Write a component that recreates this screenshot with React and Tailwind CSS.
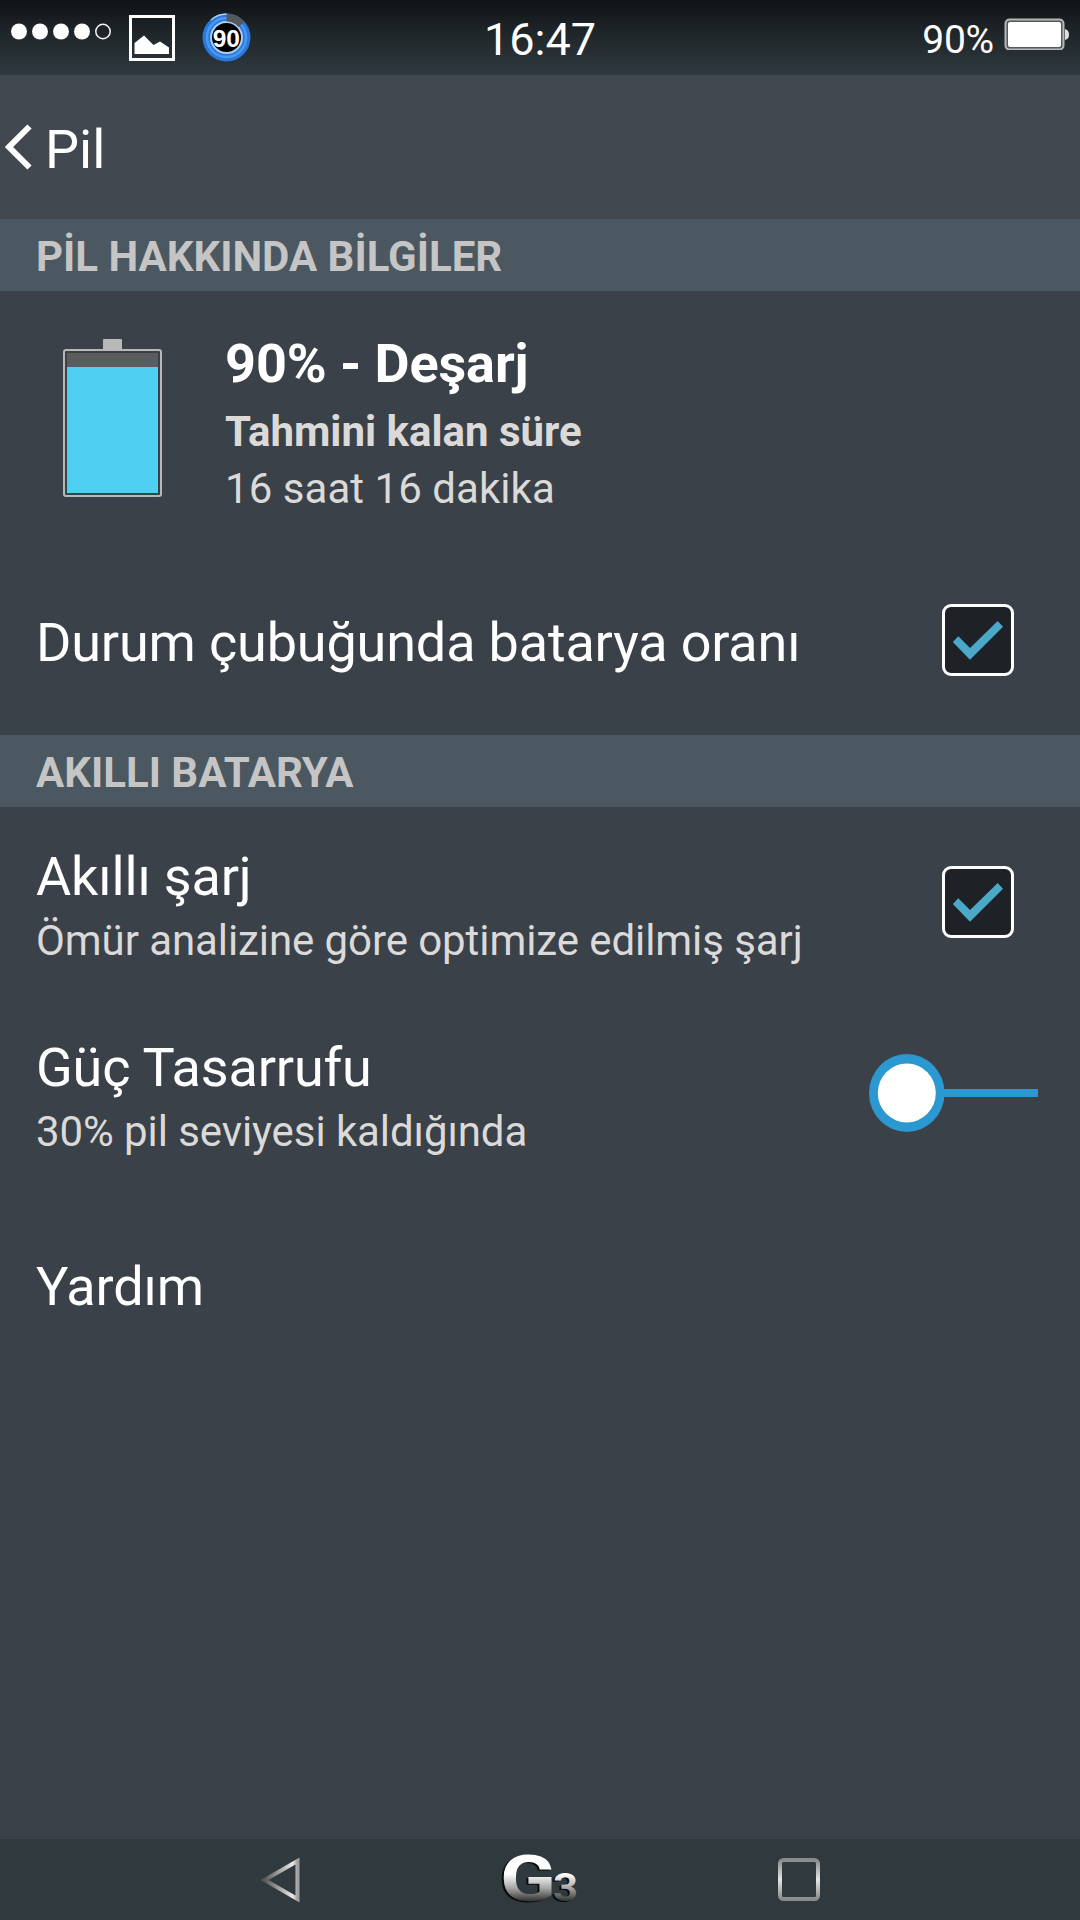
import React, { useState } from 'react';

const StatusBar = () => {
  return (
    <div className="h-[75px] shrink-0 grid grid-cols-3 bg-linear-to-b from-[#101316] via-[#21282c] to-[#2f393f]">
      <div className="flex items-start">
        <svg width="120" height="75" viewBox="0 0 120 75" className="shrink-0">
          {[19, 40, 61, 82].map((cx) => (
            <circle key={cx} cx={cx} cy="31.5" r="8" fill="#fff" />
          ))}
          <circle cx="103" cy="31.5" r="7.2" fill="none" stroke="#f4f4f4" strokeWidth="1.5" />
        </svg>
        {/* gallery notification */}
        <svg width="46" height="46" viewBox="0 0 46 46" className="ml-[9px] mt-[15px] shrink-0">
          <rect x="1.5" y="1.5" width="43" height="43" fill="none" stroke="#fff" strokeWidth="3" />
          <path d="M5.5 39V28L15 20.5L24.5 30L31 26.5L40 32.5V39Z" fill="#fff" />
        </svg>
        {/* battery monitor notification */}
        <svg width="50" height="50" viewBox="0 0 50 50" className="ml-[27px] mt-[12px] shrink-0">
          <circle cx="24.5" cy="25.5" r="24" fill="#2a78dc" />
          <circle cx="24.5" cy="25.5" r="19.5" fill="none" stroke="#4b98f0" strokeWidth="2.5" />
          <circle cx="24.5" cy="25.5" r="15.5" fill="#000" stroke="#a9cdf8" strokeWidth="2" />
          <path d="M24.5 1.5A24 24 0 0 1 42.5 10L36.5 15A16 16 0 0 0 24.5 9.5Z" fill="#55585a" />
          <path d="M24.5 2A23.500 23.500 0 0 0 9 8" fill="none" stroke="#a9cdf8" strokeWidth="1.5" />
          <text x="24.3" y="35" textAnchor="middle" fontSize="24.5" fontWeight="700" fill="#fff" fontFamily="Liberation Sans, sans-serif">90</text>
        </svg>
      </div>
      <div className="text-center text-[45px] leading-[79px] text-white">16:47</div>
      <div className="flex items-start justify-end pr-[11px]">
        <span className="text-[39px] leading-[80px] tracking-[-0.2px] text-white">90%</span>
        <svg width="65" height="32" viewBox="0 0 65 32" className="ml-2.5 mt-[18px]">
          <rect x="1.5" y="1.5" width="58" height="30" rx="4" fill="#55595c" stroke="#b5b7b9" strokeWidth="2" />
          <rect x="4" y="4" width="53" height="25" rx="2" fill="#fff" />
          <path d="M61 11Q65 12 65 16.500Q65 21 61 22Z" fill="#e0e0e0" />
        </svg>
      </div>
    </div>
  );
};

const SectionTitle = ({ children }) => (
  <h2 className="h-[72px] shrink-0 bg-[#4b5861] px-9 pt-[3px] text-[42px] leading-[70px] font-bold text-[#c5c5c5] whitespace-nowrap">
    {children}
  </h2>
);

const Checkbox = ({ checked, onChange }) => (
  <button
    onClick={() => onChange(!checked)}
    className="mr-[30px] size-[72px] shrink-0 rounded-[9px] border-3 border-white bg-[#1e2227]"
  >
    {checked && (
      <svg width="66" height="66" viewBox="3 3 66 66">
        <path d="M10.800 38L16.300 32.300L28 44L55.700 17L61 22.700L28 55.700Z" fill="#4aa8c8" />
      </svg>
    )}
  </button>
);

const Toggle = ({ onClick }) => (
  <button onClick={onClick} className="mr-[5px] shrink-0">
    <svg width="170" height="78" viewBox="0 0 170 78" className="block">
      <rect x="38" y="35" width="131" height="8" fill="#2b99cf" />
      <ellipse cx="37.800" cy="39" rx="37.800" ry="39" fill="#2b99cf" />
      <ellipse cx="37.800" cy="39" rx="29" ry="29.500" fill="#fff" />
    </svg>
  </button>
);

const SettingRow = ({ title, summary, height = 'h-[190px]', children }) => (
  <div className={`${height} shrink-0 flex items-center justify-between px-9`}>
    <div className={summary ? 'pt-[14px]' : 'pt-[5px]'}>
      <p className="text-[54px] leading-[63px] tracking-[-0.17px] text-white whitespace-nowrap">{title}</p>
      {summary && (
        <p className="text-[42px] leading-[65px] tracking-[-0.08px] text-[#dbdad9] whitespace-nowrap">{summary}</p>
      )}
    </div>
    {children}
  </div>
);

const NavBar = () => (
  <div className="mt-auto h-[81px] shrink-0 bg-[#2f393e] flex">
    <svg width="1080" height="81" viewBox="0 0 1080 81">
      <defs>
        <linearGradient id="metal" x1="0" y1="16" x2="0" y2="63" gradientUnits="userSpaceOnUse">
          <stop offset="0.4" stopColor="#fff" />
          <stop offset="0.7" stopColor="#a8a8a8" />
          <stop offset="1" stopColor="#2a2a2a" />
        </linearGradient>
        <linearGradient id="back" x1="0" y1="0" x2="1" y2="0">
          <stop offset="0" stopColor="#5a5656" />
          <stop offset="0.85" stopColor="#e8e8e8" />
          <stop offset="1" stopColor="#a0a0a0" />
        </linearGradient>
        <linearGradient id="recent" x1="0" y1="0" x2="0" y2="1">
          <stop offset="0" stopColor="#8a8a8a" />
          <stop offset="0.500" stopColor="#e4e4e4" />
          <stop offset="1" stopColor="#8a8a8a" />
        </linearGradient>
      </defs>
      <path d="M264.500 41L297.500 22V60Z" fill="none" stroke="url(#back)" strokeWidth="4" />
      <g fontFamily="Roboto, sans-serif" fontWeight="700">
        <text x="498" y="63" fontSize="64" textLength="56" lengthAdjust="spacingAndGlyphs" fill="#0a0a0a">G</text>
        <text x="500" y="62" fontSize="64" textLength="56" lengthAdjust="spacingAndGlyphs" fill="url(#metal)">G</text>
        <text x="551" y="63" fontSize="38" textLength="25" lengthAdjust="spacingAndGlyphs" fill="#0a0a0a">3</text>
        <text x="553" y="62" fontSize="38" textLength="25" lengthAdjust="spacingAndGlyphs" fill="url(#metal)">3</text>
      </g>
      <rect x="780" y="21" width="38" height="39" rx="3.500" fill="none" stroke="url(#recent)" strokeWidth="4" />
    </svg>
  </div>
);

const BatterySettings = () => {
  const [showPercent, setShowPercent] = useState(true);
  const [smartCharge, setSmartCharge] = useState(true);
  const [powerSave, setPowerSave] = useState(false);

  return (
    <div className="w-[1080px] h-[1920px] flex flex-col overflow-hidden bg-[#3a4148] font-['Roboto',sans-serif]">
      <StatusBar />

      {/* Header */}
      <div className="h-[144px] shrink-0 flex items-center bg-[#42484f] pl-[5px]">
        <svg width="28" height="46" viewBox="0 0 28 46">
          <path d="M24.500 2.500L4 23L24.500 43.500" fill="none" stroke="#fff" strokeWidth="6" />
        </svg>
        <h1 className="ml-3 pt-[5px] text-[54px] leading-[63px] text-white">Pil</h1>
      </div>

      <SectionTitle>PİL HAKKINDA BİLGİLER</SectionTitle>

      {/* Battery summary */}
      <div className="h-[254px] shrink-0 flex items-start pl-[63px]">
        <svg width="99" height="158" viewBox="0 0 99 158" className="mt-12 shrink-0">
          <rect x="40" y="0" width="19" height="12" rx="1" fill="#b8b8b9" />
          <rect x="1" y="11" width="97" height="146" rx="2" fill="#3a4148" stroke="#b8b8b9" strokeWidth="2" />
          <rect x="4" y="14" width="91" height="14" fill="#5b5c5e" />
          <rect x="4" y="28" width="91" height="126" fill="#4fd0f2" />
        </svg>
        <div className="ml-[63px] mt-[41px] whitespace-nowrap">
          <p className="text-[54px] leading-[64px] tracking-[-0.1px] font-bold text-white">90% - Deşarj</p>
          <p className="mt-[7px] text-[42px] leading-[58px] font-bold text-[#dbdad9]">Tahmini kalan süre</p>
          <p className="text-[42px] leading-[56px] tracking-[0.05px] text-[#dbdad9]">16 saat 16 dakika</p>
        </div>
      </div>

      <SettingRow title="Durum çubuğunda batarya oranı">
        <Checkbox checked={showPercent} onChange={setShowPercent} />
      </SettingRow>

      <SectionTitle>AKILLI BATARYA</SectionTitle>

      <SettingRow title="Akıllı şarj" summary="Ömür analizine göre optimize edilmiş şarj">
        <Checkbox checked={smartCharge} onChange={setSmartCharge} />
      </SettingRow>
      <SettingRow title="Güç Tasarrufu" summary="30% pil seviyesi kaldığında" height="h-[192px]">
        <Toggle onClick={() => setPowerSave(!powerSave)} />
      </SettingRow>
      <SettingRow title="Yardım" />

      <NavBar />
    </div>
  );
};

export default BatterySettings;
